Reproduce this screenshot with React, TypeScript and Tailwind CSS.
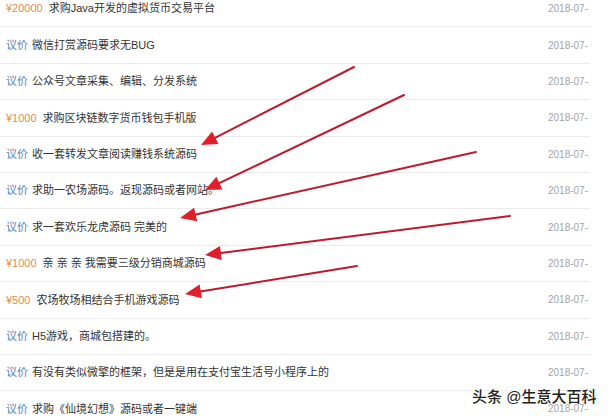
import React from 'react'

type Row = { price?: string; title: string }

const rows: Row[] = [
  { price: '¥20000', title: '求购Java开发的虚拟货币交易平台' },
  { title: '微信打赏源码要求无BUG' },
  { title: '公众号文章采集、编辑、分发系统' },
  { price: '¥1000', title: '求购区块链数字货币钱包手机版' },
  { title: '收一套转发文章阅读赚钱系统源码' },
  { title: '求助一农场源码。返现源码或者网站。' },
  { title: '求一套欢乐龙虎源码 完美的' },
  { price: '¥1000', title: '亲 亲 亲 我需要三级分销商城源码' },
  { price: '¥500', title: '农场牧场相结合手机游戏源码' },
  { title: 'H5游戏，商城包搭建的。' },
  { title: '有没有类似微擎的框架，但是是用在支付宝生活号小程序上的' },
  { title: '求购《仙境幻想》源码或者一键端' },
]

// start point -> arrow tip
const arrows = [
  [354, 67, 201, 145],
  [404, 95, 205, 190],
  [476, 152, 180, 218],
  [510, 216, 205, 255],
  [357, 266, 185, 294],
]

const Arrow = ({ a }: { a: number[] }) => {
  const [x1, y1, x2, y2] = a
  const len = Math.hypot(x2 - x1, y2 - y1)
  const ux = (x2 - x1) / len
  const uy = (y2 - y1) / len
  const bx = x2 - ux * 16
  const by = y2 - uy * 16
  const pts = `${x2},${y2} ${bx - uy * 7},${by + ux * 7} ${bx + uy * 7},${by - ux * 7}`
  return (
    <g>
      <line x1={x1} y1={y1} x2={bx + ux * 2} y2={by + uy * 2} stroke="#be1a2e" strokeWidth={2} strokeLinecap="round" />
      <polygon points={pts} fill="#e01f2a" />
    </g>
  )
}

const App = () => {
  return (
    <div className="relative w-[610px] h-[416px] overflow-hidden bg-white" style={{ fontFamily: '"Liberation Sans", "Noto Sans CJK SC", sans-serif' }}>
      <ul className="w-[590px] -mt-[9px]">
        {rows.map((r, i) => (
          <li key={i} className="h-[36.4px] flex items-center border-b border-[#ececec] pl-[6px] pr-[2px]">
            {r.price ? (
              <span className="text-[11px] text-[#e58a4e] mr-[6px]">{r.price}</span>
            ) : (
              <span className="text-[11px] text-[#4f86bd] mr-[4px]">议价</span>
            )}
            <span className="text-[11px] text-[#333] whitespace-nowrap">{r.title}</span>
            <span className="ml-auto text-[10px] text-[#a3a3a3]">2018-07-</span>
          </li>
        ))}
      </ul>

      <svg className="absolute inset-0 pointer-events-none" width="610" height="416">
        {arrows.map((a, i) => (
          <Arrow key={i} a={a} />
        ))}
      </svg>

      <div
        className="absolute left-[472px] top-[386px] text-[15px] font-medium text-[#222] whitespace-nowrap"
        style={{ textShadow: '0 0 2px #fff, 0 0 2px #fff' }}
      >
        头条 @生意大百科
      </div>
    </div>
  )
}

export default App
